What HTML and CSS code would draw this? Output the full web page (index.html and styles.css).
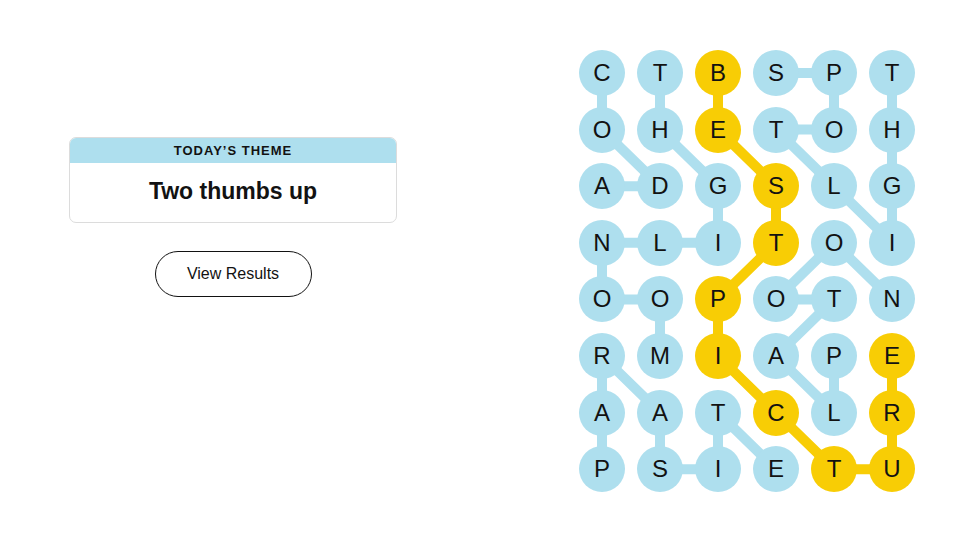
FILE: index.html
```html
<!DOCTYPE html>
<html lang="en">
<head>
<meta charset="utf-8">
<title>Strands</title>
<link rel="stylesheet" href="styles.css">
</head>
<body>
<main class="page">
  <section class="side">
    <div class="theme-card">
      <div class="theme-head">TODAY’S THEME</div>
      <div class="theme-body">Two thumbs up</div>
    </div>
    <button class="results-btn" type="button">View Results</button>
  </section>
  <section class="board">
    <svg class="links" width="336" height="443" viewBox="0 0 336 443" aria-hidden="true">
      <g class="blue" fill="none" stroke-linecap="round" stroke-linejoin="round">
        <polyline points="23,23 23,79.6 81,136.2 23,136.2"/>
        <polyline points="81,306 81,249.4 23,249.4 23,192.8 81,192.8 139,192.8 139,136.2 81,79.6 81,23"/>
        <polyline points="197,23 255,23 255,79.6 197,79.6 255,136.2 313,192.8 313,136.2 313,79.6 313,23"/>
        <polyline points="23,419.2 23,362.6 23,306 81,362.6 81,419.2 139,419.2 139,362.6 197,419.2"/>
        <polyline points="255,306 255,362.6 197,306 255,249.4 197,249.4 255,192.8 313,249.4"/>
      </g>
      <g class="gold" fill="none" stroke-linecap="round" stroke-linejoin="round">
        <polyline points="139,23 139,79.6 197,136.2 197,192.8 139,249.4 139,306 197,362.6 255,419.2 313,419.2 313,362.6 313,306"/>
      </g>
    </svg>
    <div class="grid">
      <div class="cell">C</div><div class="cell">T</div><div class="cell span">B</div><div class="cell">S</div><div class="cell">P</div><div class="cell">T</div>
      <div class="cell">O</div><div class="cell">H</div><div class="cell span">E</div><div class="cell">T</div><div class="cell">O</div><div class="cell">H</div>
      <div class="cell">A</div><div class="cell">D</div><div class="cell">G</div><div class="cell span">S</div><div class="cell">L</div><div class="cell">G</div>
      <div class="cell">N</div><div class="cell">L</div><div class="cell">I</div><div class="cell span">T</div><div class="cell">O</div><div class="cell">I</div>
      <div class="cell">O</div><div class="cell">O</div><div class="cell span">P</div><div class="cell">O</div><div class="cell">T</div><div class="cell">N</div>
      <div class="cell">R</div><div class="cell">M</div><div class="cell span">I</div><div class="cell">A</div><div class="cell">P</div><div class="cell span">E</div>
      <div class="cell">A</div><div class="cell">A</div><div class="cell">T</div><div class="cell span">C</div><div class="cell">L</div><div class="cell span">R</div>
      <div class="cell">P</div><div class="cell">S</div><div class="cell">I</div><div class="cell">E</div><div class="cell span">T</div><div class="cell span">U</div>
    </div>
  </section>
</main>
</body>
</html>
```
FILE: styles.css
```css
* { box-sizing: border-box; }
html, body {
  margin: 0;
  padding: 0;
  background: #ffffff;
}
body {
  font-family: "Liberation Sans", Arial, sans-serif;
  color: #121212;
}
.page {
  display: flex;
  width: 980px;
  height: 549px;
}
.side {
  width: 328px;
  margin-left: 69px;
  padding-top: 137px;
  display: flex;
  flex-direction: column;
  align-items: center;
}
.theme-card {
  width: 328px;
  border: 1px solid #dcdcdc;
  border-radius: 7px;
  overflow: hidden;
  background: #fff;
}
.theme-head {
  height: 25px;
  background: #aedfee;
  font-size: 13px;
  font-weight: 700;
  letter-spacing: 1px;
  line-height: 25px;
  text-align: center;
  color: #121212;
}
.theme-body {
  height: 59px;
  display: flex;
  align-items: center;
  justify-content: center;
  font-size: 23px;
  font-weight: 700;
  padding-bottom: 3px;
}
.results-btn {
  margin-top: 28px;
  width: 157px;
  height: 46px;
  border: 1px solid #121212;
  border-radius: 23px;
  background: #fff;
  font-family: "Liberation Sans", Arial, sans-serif;
  font-size: 16px;
  color: #121212;
  padding: 0;
}
.board {
  position: relative;
  margin-left: auto;
  margin-right: 65px;
  margin-top: 50px;
  width: 336px;
  height: 443px;
}
.links {
  position: absolute;
  left: 0;
  top: 0;
}
.blue polyline { stroke: #aedfee; stroke-width: 10; }
.gold polyline { stroke: #f8cd05; stroke-width: 10; }
.grid {
  position: relative;
  display: grid;
  grid-template-columns: repeat(6, 46px);
  grid-auto-rows: 46px;
  column-gap: 12px;
  row-gap: 10.6px;
}
.cell {
  width: 46px;
  height: 46px;
  border-radius: 50%;
  background: #aedfee;
  display: flex;
  align-items: center;
  justify-content: center;
  font-size: 24px;
  color: #121212;
  line-height: 1;
}
.cell.span { background: #f8cd05; }
```
